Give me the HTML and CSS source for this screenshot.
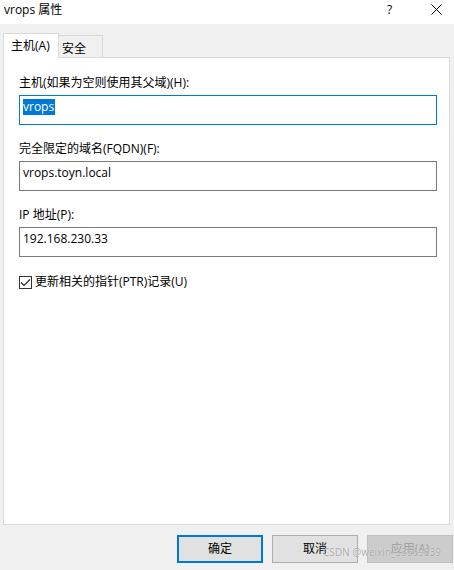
FILE: index.html
```html
<!DOCTYPE html>
<html lang="zh-CN">
<head>
<meta charset="utf-8">
<title>vrops 属性</title>
<link rel="stylesheet" href="styles.css">
</head>
<body>
<div class="window">
  <div class="titlebar">
    <span class="title">vrops 属性</span>
    <span class="tb-help">?</span>
    <span class="tb-close">
      <svg width="11" height="11" viewBox="0 0 11 11"><path d="M0.5 0.5 L10.5 10.5 M10.5 0.5 L0.5 10.5" stroke="#000" stroke-width="1" fill="none"/></svg>
    </span>
  </div>
  <div class="tabstrip">
    <div class="tab tab-active">主机(A)</div>
    <div class="tab tab-inactive">安全</div>
  </div>
  <div class="panel">
    <div class="field">
      <div class="label">主机(如果为空则使用其父域)(H):</div>
      <div class="input input-focus"><span class="sel">vrops</span></div>
    </div>
    <div class="field">
      <div class="label">完全限定的域名(FQDN)(F):</div>
      <div class="input">vrops.toyn.local</div>
    </div>
    <div class="field">
      <div class="label">IP 地址(P):</div>
      <div class="input">192.168.230.33</div>
    </div>
    <div class="check-row">
      <span class="checkbox">
        <svg width="11" height="11" viewBox="0 0 11 11"><path d="M1 5.5 L4 8.5 L10 2.5" stroke="#222" stroke-width="1.1" fill="none"/></svg>
      </span>
      <span class="check-label">更新相关的指针(PTR)记录(U)</span>
    </div>
  </div>
  <div class="buttons">
    <div class="btn btn-default">确定</div>
    <div class="btn">取消</div>
    <div class="btn btn-disabled">应用(A)</div>
  </div>
  <div class="watermark">CSDN @weixin_33669839</div>
</div>
</body>
</html>
```
FILE: styles.css
```css
* { box-sizing: border-box; }
html, body { margin: 0; padding: 0; }
body {
  background: #f0f0f0;
  font-family: "Open Sans", "Noto Sans CJK SC", sans-serif;
  font-size: 12px;
  color: #000;
}
.window {
  position: relative;
  width: 454px;
  height: 570px;
  overflow: hidden;
}
.titlebar {
  height: 24px;
  background: #fff;
  display: flex;
  align-items: center;
  padding-left: 4px;
}
.title {
  flex: 1;
  font-size: 12px;
  line-height: 16px;
  margin-top: -4px;
}
.tb-help {
  font-size: 12px;
  line-height: 16px;
  margin-top: -5px;
  width: 7px;
  margin-right: 37px;
}
.tb-close {
  display: flex;
  width: 11px;
  height: 11px;
  margin-right: 12px;
  margin-top: -6px;
}
.tabstrip {
  height: 33px;
  display: flex;
  align-items: flex-end;
  padding-left: 3px;
}
.tab {
  line-height: 16px;
  border: 1px solid #d9d9d9;
  border-bottom: none;
}
.tab-active {
  position: relative;
  z-index: 1;
  background: #fff;
  width: 56px;
  height: 25px;
  margin-bottom: -1px;
  padding: 4px 0 0 7px;
}
.tab-inactive {
  background: #f0f0f0;
  width: 44px;
  height: 22px;
  border-left: none;
  padding: 5px 0 0 3px;
}
.panel {
  margin-left: 3px;
  width: 447px;
  height: 468px;
  background: #fff;
  border: 1px solid #d9d9d9;
  padding: 17px 12px 0 15px;
  display: flex;
  flex-direction: column;
}
.field {
  display: flex;
  flex-direction: column;
  gap: 4px;
  margin-bottom: 16px;
}
.label {
  line-height: 16px;
}
.input {
  height: 30px;
  border: 1px solid #7a7a7a;
  padding: 3px 0 0 3px;
  line-height: 16px;
}
.input-focus {
  border-color: #0078d7;
}
.sel {
  background: #0078d7;
  color: #fff;
  display: inline-block;
  line-height: 16px;
  padding-right: 1px;
}
.check-row {
  display: flex;
  align-items: center;
  height: 16px;
  margin-top: 1px;
}
.checkbox {
  width: 13px;
  height: 13px;
  border: 1px solid #333;
  background: #fff;
  display: flex;
  align-items: center;
  justify-content: center;
  margin-right: 3px;
}
.check-label {
  line-height: 16px;
}
.buttons {
  display: flex;
  justify-content: flex-end;
  gap: 9px;
  margin-top: 10px;
  padding-right: 1px;
}
.btn {
  width: 86px;
  height: 28px;
  background: #e1e1e1;
  border: 1px solid #adadad;
  display: flex;
  align-items: center;
  justify-content: center;
  line-height: 16px;
}
.btn-default {
  border: 2px solid #0078d7;
}
.btn-disabled {
  background: #cccccc;
  border-color: #bfbfbf;
  color: #a0a0a0;
}
.watermark {
  position: absolute;
  left: 323px;
  top: 546px;
  font-size: 10px;
  line-height: 13px;
  color: rgba(140, 140, 140, 0.75);
  text-shadow: 0 0 1px #fff;
  white-space: nowrap;
}
```
